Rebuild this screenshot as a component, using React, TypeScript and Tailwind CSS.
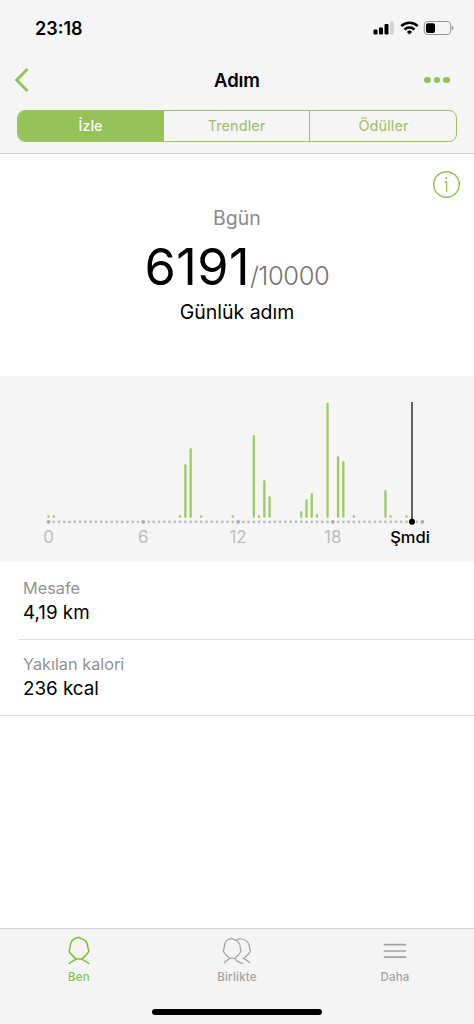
import React from "react";

const STEP = 5.265;
const START = 48.5;

// [slot of twenty minutes, height of the bar]
const BARS: [number, number][] = [
  [0, 2.5], [1, 2.5], [25, 2.5], [26, 53.5], [27, 69.5], [29, 2.5], [35, 2.5],
  [39, 82.5], [40, 2.5], [41, 37.5], [42, 21.5], [48, 6.5], [49, 18.5],
  [50, 24.5], [51, 3.5], [53, 115], [55, 61.5], [56, 56.5], [58, 2.5],
  [64, 27.5], [65, 2.5], [68, 2.5],
];

const HOURS: [string, number][] = [["0", 0], ["6", 18], ["12", 36], ["18", 54]];

function StatusBar() {
  return (
    <div className="flex h-[56px] items-center justify-between pl-[35px] pr-[19px]">
      <span className="pt-[2px] text-[18px] font-semibold leading-none">23:18</span>
      <svg width="82" height="16" viewBox="0 0 82 16">
        <rect x="0.5" y="9.5" width="4" height="5" rx="1" />
        <rect x="6" y="7.5" width="4" height="7" rx="1" />
        <rect x="11.5" y="4" width="4" height="10.5" rx="1" />
        <rect x="17" y="1.5" width="3.8" height="13" rx="1" fill="#d2d2d2" />
        <g fill="none" stroke="#000" strokeWidth="2.5">
          <path d="M28.3 6.2a11.6 11.6 0 0 1 16.4 0" />
          <path d="M31.5 9.6a7 7 0 0 1 10 0" />
        </g>
        <path d="M36.5 14.6l-2.6-2.7a3.7 3.7 0 0 1 5.2 0z" />
        <rect x="51.3" y="1.5" width="26.4" height="13" rx="3.8" fill="none" stroke="#999" strokeWidth="1.1" />
        <rect x="53" y="3.2" width="9" height="9.8" rx="2" />
        <path d="M79.2 5.8c1.7.6 1.7 3.8 0 4.4z" fill="#888" />
      </svg>
    </div>
  );
}

function Header() {
  return (
    <header className="h-[154px] border-b border-[#cfd0d0] bg-[#f5f5f5]">
      <StatusBar />
      <div className="grid h-[48px] grid-cols-3 items-center pl-[14px] pr-[24px]">
        <svg width="18" height="26" viewBox="0 0 18 26" fill="none" stroke="#93c155" strokeWidth="3">
          <path d="M13.5 2L2.7 13l10.8 11" />
        </svg>
        <h1 className="ml-[10px] text-center text-[18.5px] font-semibold leading-none tracking-[-0.1px]">Adım</h1>
        <div className="flex justify-end gap-[3px]">
          <i className="size-[6.5px] rounded-full bg-[#93c155]" />
          <i className="size-[6.5px] rounded-full bg-[#93c155]" />
          <i className="size-[6.5px] rounded-full bg-[#93c155]" />
        </div>
      </div>
      <div className="mx-[17px] mt-[6px] grid h-[32px] grid-cols-3 divide-x divide-[#9dc35d] overflow-hidden rounded-[8px] border border-[#9dc35d] text-[14.5px] text-[#9cbf63]">
        <button className="bg-[#95c359] text-[14.5px] font-medium text-white">İzle</button>
        <button className="tracking-[0.05px]">Trendler</button>
        <button className="pl-px tracking-[0.1px]">Ödüller</button>
      </div>
    </header>
  );
}

function Summary() {
  return (
    <section className="flex h-[222px] flex-col items-center">
      <svg className="mr-[13px] mt-[16px] self-end" width="29" height="29" viewBox="0 0 29 29" fill="none" stroke="#98c052">
        <circle cx="14.5" cy="14.5" r="12.8" strokeWidth="1.5" />
        <path d="M12.4 12h2.2v10" strokeWidth="1.3" />
        <circle cx="14.3" cy="8.2" r="1.1" fill="#98c052" stroke="none" />
      </svg>
      <p className="mt-[7px] text-[19.5px] leading-[24px] text-[#8a8a8a]">Bgün</p>
      <p className="mt-[9px] flex items-baseline leading-[56px]">
        <span className="text-[50.5px] tracking-[0.4px]">6191</span>
        <span className="text-[25.5px] font-light tracking-[-0.4px] text-[#747474]">/10000</span>
      </p>
      <p className="-mt-[4px] text-[19.5px] leading-[24px]">Günlük adım</p>
    </section>
  );
}

function StepChart() {
  return (
    <section className="h-[186px] bg-[#f5f5f5]">
      <svg width="474" height="186" viewBox="0 0 474 186" fontFamily="Inter, sans-serif">
        {Array.from({ length: 72 }, (_, i) => {
          const major = i % 18 === 0 || i === 71;
          return <circle key={i} cx={START + i * STEP} cy="145.8" r={major ? 1.9 : 1.35} fill={major ? "#ababab" : "#bababa"} />;
        })}
        {BARS.map(([slot, h]) => (
          <rect key={slot} x={START + slot * STEP - 1.15} y={141.8 - h} width="2.3" height={h} rx="0.8" fill="#9bcb62" />
        ))}
        <path d="M412 26v120" stroke="#222" strokeWidth="1.4" />
        <circle cx="412" cy="145.8" r="3" />
        <g fontSize="17" fill="#bdbdbd" textAnchor="middle">
          {HOURS.map(([label, slot]) => (
            <text key={label} x={START + slot * STEP} y="166.5">{label}</text>
          ))}
          <text x="410" y="166.5" fill="#000" fontSize="16.5" fontWeight="500">Şmdi</text>
        </g>
      </svg>
    </section>
  );
}

function Metric({ label, value }: { label: string; value: string }) {
  return (
    <>
      <p className="text-[16.3px] leading-[22px] text-[#929292]">{label}</p>
      <p className="mt-[2px] text-[18.8px] leading-[24px]">{value}</p>
    </>
  );
}

function TabBar() {
  return (
    <nav className="h-[96px] border-t border-[#d6d6d6] bg-[#f4f4f5]">
      <div className="grid h-[80px] grid-cols-3 pt-[7px] text-[11.5px] font-medium leading-[14px] tracking-[0.2px] text-[#a2a2a2]">
        <div className="flex flex-col items-center gap-[4px] text-[#85c440]">
          <svg width="24" height="30" viewBox="0 0 24 30" fill="none" stroke="#78c32d" strokeWidth="1.5" strokeLinejoin="round">
            <path d="M9 22.9C7 20.6 3.6 18.6 2.4 15.9c-.6-1.6.5-2.4.6-4.1C3.2 6.2 5.6 2.2 11 1.5c1-.5 2.2 0 2.1.9 4.9.6 7.6 3.9 7.9 9.4.1 1.7 1.2 2.5.6 4.1-1.2 2.7-4.6 4.7-6.6 7z" />
            <path d="M9 22.9c-.3 1.6-4.6 1.9-7.2 5.2M15 22.9c.3 1.6 4.6 1.9 7.2 5.2" />
          </svg>
          Ben
        </div>
        <div className="flex flex-col items-center gap-[4px]">
          <svg width="30" height="30" viewBox="0 0 30 30" fill="none" stroke="#a6a6a6" strokeWidth="1.25" strokeLinejoin="round">
            <path d="M7.5 22.3C5.8 20.2 2.6 18.2 1.5 15.6c-.5-1.4.5-2.2.6-3.7C2.3 6.6 4.5 3.2 9.2 2.6c.9-.5 2-.1 1.9.8 4.6.5 7 3.6 7.2 8.5.1 1.5 1.1 2.3.6 3.7-1.1 2.6-4.3 4.6-6 6.7z" />
            <path d="M7.5 22.3c-.3 1.4-3.5 1.8-5.5 4.9M12.9 22.3c1.4 2.9 3.6 4.8 8.4 5M14.5 4c1.2-.8 2.9-1.3 4.9-1 5.2.5 7.9 3.8 8.2 8.9.1 1.5 1.1 2.3.6 3.7-1.1 2.6-4.3 4.6-6 6.7h-1.6M22.2 22.3c.3 1.4 3.8 1.8 5.8 4.9" />
          </svg>
          Birlikte
        </div>
        <div className="flex flex-col items-center gap-[4px]">
          <svg width="24" height="30" viewBox="0 0 24 30" stroke="#a2a2a2" strokeWidth="1.7" strokeLinecap="round">
            <path d="M1.5 8.7h21M1.5 15h21M1.5 21.2h21" />
          </svg>
          Daha
        </div>
      </div>
      <div className="mx-auto h-[6px] w-[170px] rounded-full bg-black" />
    </nav>
  );
}

export default function App() {
  return (
    <main className="flex h-[1024px] w-[474px] flex-col overflow-hidden bg-white font-['Inter',sans-serif] text-black">
      <Header />
      <Summary />
      <StepChart />
      <section className="ml-[18px] h-[78px] border-b border-[#dedede] pl-[5px] pt-[15px]">
        <Metric label="Mesafe" value="4,19 km" />
      </section>
      <section className="h-[76px] border-b border-[#d9d9d9] pl-[23px] pt-[13px]">
        <Metric label="Yakılan kalori" value="236 kcal" />
      </section>
      <div className="flex-1" />
      <TabBar />
    </main>
  );
}
